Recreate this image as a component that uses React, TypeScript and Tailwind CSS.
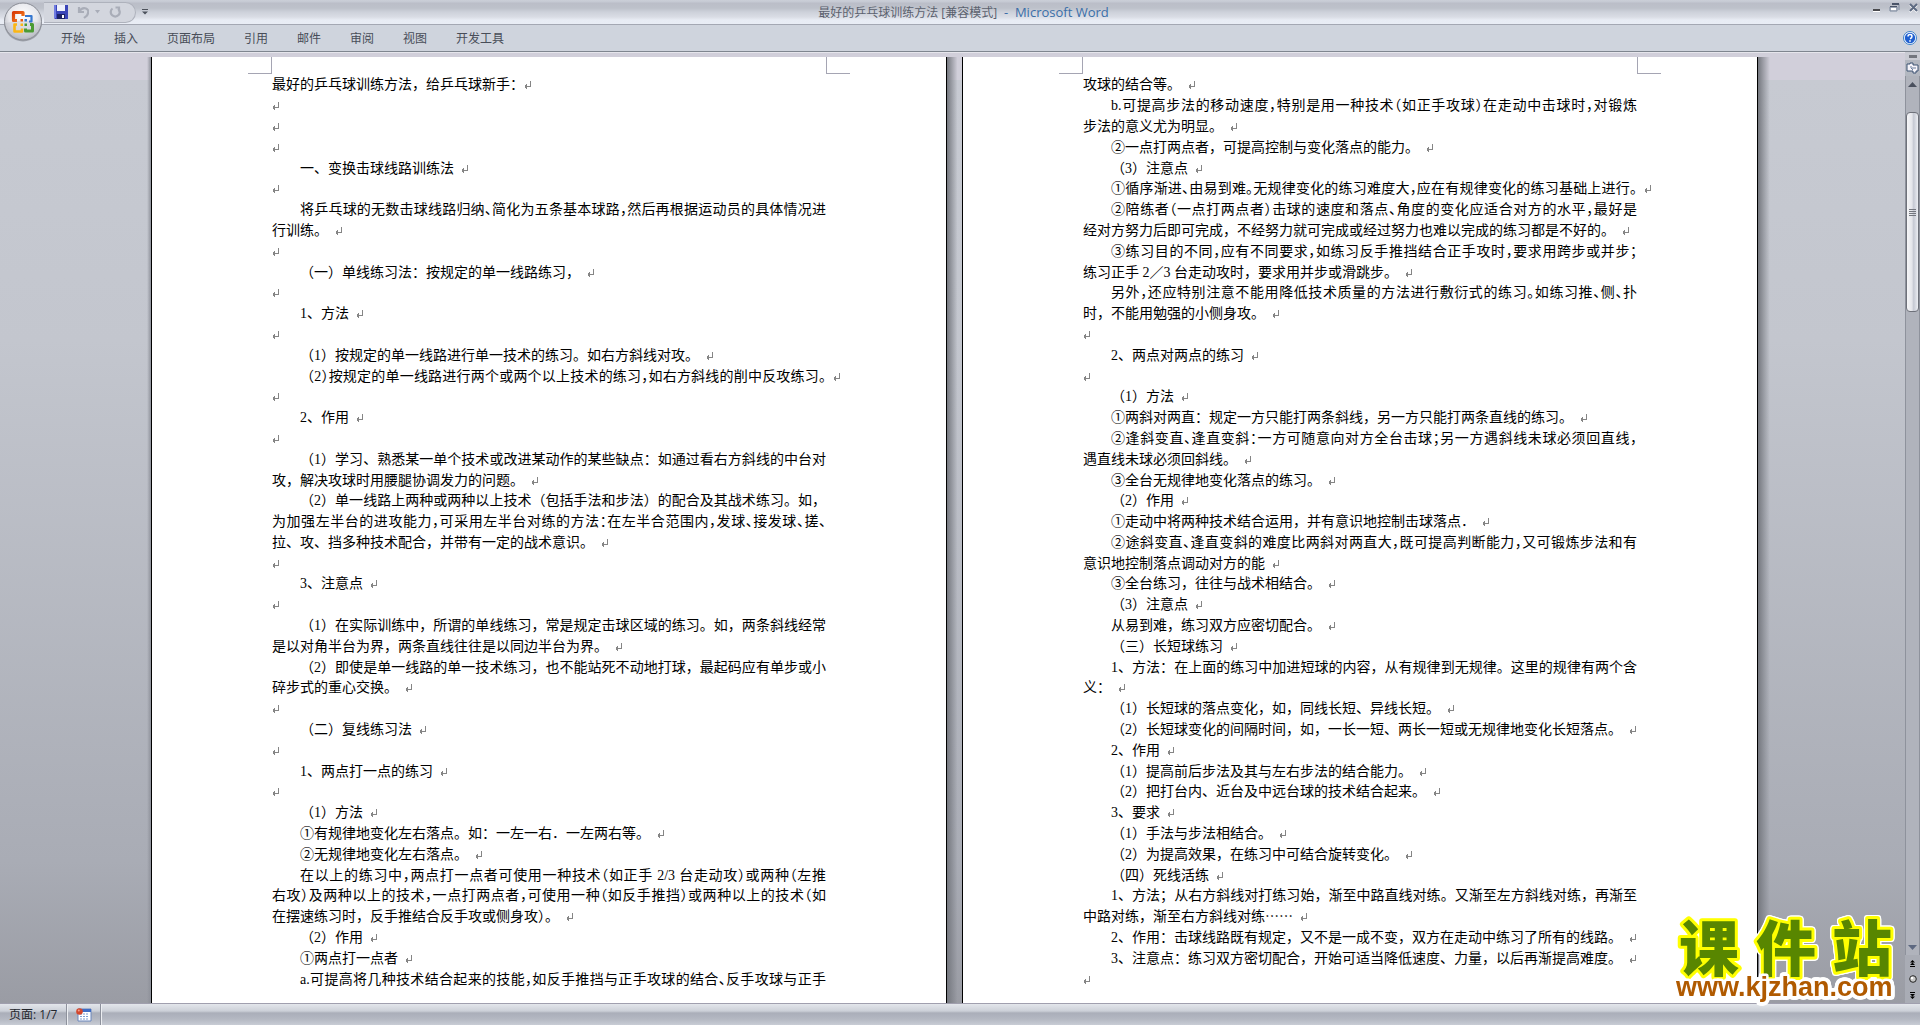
import React from "react";
import { clsx } from "clsx";

interface Line {
  text?: string;
  // first line of a paragraph starts two characters in
  indent?: boolean;
  // line runs on into the next one, so it is justified and has no mark
  fill?: boolean;
  // mark sits right against the text
  flush?: boolean;
}

const TABS = ["开始", "插入", "页面布局", "引用", "邮件", "审阅", "视图", "开发工具"];

const MAX_CELLS = 39.5;

const PAGE_ONE: Line[] = [
  { text: "最好的乒乓球训练方法，给乒乓球新手：", flush: true },
  {},
  {},
  {},
  { text: "一、变换击球线路训练法", indent: true },
  {},
  { text: "将乒乓球的无数击球线路归纳、简化为五条基本球路，然后再根据运动员的具体情况进", indent: true, fill: true },
  { text: "行训练。" },
  {},
  { text: "（一）单线练习法：按规定的单一线路练习，", indent: true },
  {},
  { text: "1、方法", indent: true },
  {},
  { text: "（1）按规定的单一线路进行单一技术的练习。如右方斜线对攻。", indent: true },
  { text: "（2）按规定的单一线路进行两个或两个以上技术的练习，如右方斜线的削中反攻练习。", indent: true },
  {},
  { text: "2、作用", indent: true },
  {},
  { text: "（1）学习、熟悉某一单个技术或改进某动作的某些缺点：如通过看右方斜线的中台对", indent: true, fill: true },
  { text: "攻，解决攻球时用腰腿协调发力的问题。" },
  { text: "（2）单一线路上两种或两种以上技术（包括手法和步法）的配合及其战术练习。如，", indent: true, fill: true },
  { text: "为加强左半台的进攻能力，可采用左半台对练的方法：在左半合范围内，发球、接发球、搓、", fill: true },
  { text: "拉、攻、挡多种技术配合，并带有一定的战术意识。" },
  {},
  { text: "3、注意点", indent: true },
  {},
  { text: "（1）在实际训练中，所谓的单线练习，常是规定击球区域的练习。如，两条斜线经常", indent: true, fill: true },
  { text: "是以对角半台为界，两条直线往往是以同边半台为界。" },
  { text: "（2）即使是单一线路的单一技术练习，也不能站死不动地打球，最起码应有单步或小", indent: true, fill: true },
  { text: "碎步式的重心交换。" },
  {},
  { text: "（二）复线练习法", indent: true },
  {},
  { text: "1、两点打一点的练习", indent: true },
  {},
  { text: "（1）方法", indent: true },
  { text: "①有规律地变化左右落点。如：一左一右．一左两右等。", indent: true },
  { text: "②无规律地变化左右落点。", indent: true },
  { text: "在以上的练习中，两点打一点者可使用一种技术（如正手 2/3 台走动攻）或两种（左推", indent: true, fill: true },
  { text: "右攻）及两种以上的技术，一点打两点者，可使用一种（如反手推挡）或两种以上的技术（如", fill: true },
  { text: "在摆速练习时，反手推结合反手攻或侧身攻）。" },
  { text: "（2）作用", indent: true },
  { text: "①两点打一点者", indent: true },
  { text: "a.可提高将几种技术结合起来的技能，如反手推挡与正手攻球的结合、反手攻球与正手", indent: true, fill: true },
];

const PAGE_TWO: Line[] = [
  { text: "攻球的结合等。" },
  { text: "b.可提高步法的移动速度，特别是用一种技术（如正手攻球）在走动中击球时，对锻炼", indent: true, fill: true },
  { text: "步法的意义尤为明显。" },
  { text: "②一点打两点者，可提高控制与变化落点的能力。", indent: true },
  { text: "（3）注意点", indent: true },
  { text: "①循序渐进、由易到难。无规律变化的练习难度大，应在有规律变化的练习基础上进行。", indent: true },
  { text: "②陪练者（一点打两点者）击球的速度和落点、角度的变化应适合对方的水平，最好是", indent: true, fill: true },
  { text: "经对方努力后即可完成，不经努力就可完成或经过努力也难以完成的练习都是不好的。" },
  { text: "③练习目的不同，应有不同要求，如练习反手推挡结合正手攻时，要求用跨步或并步；", indent: true, fill: true },
  { text: "练习正手 2／3 台走动攻时，要求用并步或滑跳步。" },
  { text: "另外，还应特别注意不能用降低技术质量的方法进行敷衍式的练习。如练习推、侧、扑", indent: true, fill: true },
  { text: "时，不能用勉强的小侧身攻。" },
  {},
  { text: "2、两点对两点的练习", indent: true },
  {},
  { text: "（1）方法", indent: true },
  { text: "①两斜对两直：规定一方只能打两条斜线，另一方只能打两条直线的练习。", indent: true },
  { text: "②逢斜变直、逢直变斜：一方可随意向对方全台击球；另一方遇斜线未球必须回直线，", indent: true, fill: true },
  { text: "遇直线未球必须回斜线。" },
  { text: "③全台无规律地变化落点的练习。", indent: true },
  { text: "（2）作用", indent: true },
  { text: "①走动中将两种技术结合运用，并有意识地控制击球落点．", indent: true },
  { text: "②途斜变直、逢直变斜的难度比两斜对两直大，既可提高判断能力，又可锻炼步法和有", indent: true, fill: true },
  { text: "意识地控制落点调动对方的能" },
  { text: "③全台练习，往往与战术相结合。", indent: true },
  { text: "（3）注意点", indent: true },
  { text: "从易到难，练习双方应密切配合。", indent: true },
  { text: "（三）长短球练习", indent: true },
  { text: "1、方法：在上面的练习中加进短球的内容，从有规律到无规律。这里的规律有两个含", indent: true, fill: true },
  { text: "义：" },
  { text: "（1）长短球的落点变化，如，同线长短、异线长短。", indent: true },
  { text: "（2）长短球变化的间隔时间，如，一长一短、两长一短或无规律地变化长短落点。", indent: true },
  { text: "2、作用", indent: true },
  { text: "（1）提高前后步法及其与左右步法的结合能力。", indent: true },
  { text: "（2）把打台内、近台及中远台球的技术结合起来。", indent: true },
  { text: "3、要求", indent: true },
  { text: "（1）手法与步法相结合。", indent: true },
  { text: "（2）为提高效果，在练习中可结合旋转变化。", indent: true },
  { text: "（四）死线活练", indent: true },
  { text: "1、方法；从右方斜线对打练习始，渐至中路直线对练。又渐至左方斜线对练，再渐至", indent: true, fill: true },
  { text: "中路对练，渐至右方斜线对练⋯⋯" },
  { text: "2、作用：击球线路既有规定，又不是一成不变，双方在走动中练习了所有的线路。", indent: true },
  { text: "3、注意点：练习双方密切配合，开始可适当降低速度、力量，以后再渐提高难度。", indent: true },
  {},
];

// a Chinese character takes one cell, a Latin one half
function countCells({ text = "", indent }: Line) {
  let cells = indent ? 2 : 0;
  for (const char of text) {
    cells += char.charCodeAt(0) < 128 ? 0.5 : 1;
  }
  return cells;
}

function ReturnMark({ className }: { className?: string }) {
  return (
    <svg
      width="8"
      height="8"
      viewBox="0 0 8 8"
      aria-hidden="true"
      className={clsx("shrink-0", className)}
      shapeRendering="crispEdges"
    >
      <path d="M6.500 0v5M0.500 5h6M1.500 4v3M2.500 3v5" stroke="#858585" fill="none" />
    </svg>
  );
}

function DocLine({ line }: { line: Line }) {
  // too many characters for the line: its punctuation goes half width
  const tight = countCells(line) > MAX_CELLS;
  const stretch = line.fill || tight;
  const opening = line.text?.startsWith("（") ? "（" : "";

  return (
    <p className={clsx("flex items-center whitespace-nowrap", line.indent && "pl-7")}>
      {line.text && (
        <span
          className={clsx(
            stretch && "min-w-0 flex-1 [text-align-last:justify]",
            tight && "[font-feature-settings:'halt']",
          )}
        >
          {opening && <span className="[font-feature-settings:normal]">{opening}</span>}
          {line.text.slice(opening.length)}
        </span>
      )}
      {!line.fill && (
        <span className="flex w-0">
          <ReturnMark className={line.text && !line.flush ? "ml-[7px]" : undefined} />
        </span>
      )}
    </p>
  );
}

function Page({ lines }: { lines: Line[] }) {
  return (
    <article className="flex w-[796px] shrink-0 flex-col border-x border-black bg-white">
      <div className="flex h-[17px] shrink-0 justify-between px-24">
        <span className="w-6 border-r border-b border-[#a5a5b3]" />
        <span className="w-6 border-b border-l border-[#a5a5b3]" />
      </div>
      <div className="grid min-h-0 flex-1 auto-rows-fr px-[120px] pt-px pb-[13px] font-['Liberation_Serif','Noto_Sans_CJK_SC',serif] text-[14px] leading-5 text-black">
        {lines.map((line, i) => (
          <DocLine key={i} line={line} />
        ))}
      </div>
    </article>
  );
}

function OfficeLogo() {
  return (
    <svg width="40" height="40" viewBox="0 0 40 40" aria-hidden="true">
      <defs>
        <radialGradient id="orb" cx="50%" cy="35%" r="65%">
          <stop offset="0" stopColor="#ffffff" />
          <stop offset=".6" stopColor="#e6e7ec" />
          <stop offset="1" stopColor="#b0b3bb" />
        </radialGradient>
        <linearGradient id="orbRed" x1="0" y1="0" x2="1" y2="1">
          <stop offset="0" stopColor="#d83b08" />
          <stop offset="1" stopColor="#f58220" />
        </linearGradient>
      </defs>
      <circle cx="20" cy="20.5" r="19" fill="#7d8089" opacity=".6" />
      <circle cx="20" cy="19.5" r="18.5" fill="url(#orb)" stroke="#8b8e97" />
      <path d="M3 21a17 15 0 0 0 34 0q-17-5-34 0z" fill="#c3c6ce" opacity=".45" />
      <g fill="none" strokeLinejoin="round">
        <path d="M14 18.500h-3.500v-8h9.500v3.500" stroke="url(#orbRed)" strokeWidth="3.200" />
        <path d="M22 14h6.500v5.500h-2.500" stroke="#3577d0" strokeWidth="2.200" />
        <path d="M14 22.500h-2.500v7h7.500v-3" stroke="#fbb614" strokeWidth="2.600" />
        <path d="M27 22.500h2.500v6.500h-7v-2.500" stroke="#4b9b34" strokeWidth="3" />
      </g>
      <g>
        <rect x="17.500" y="17" width="2.500" height="2.500" fill="#e8590c" />
        <rect x="21.500" y="17" width="2.500" height="2.500" fill="#3577d0" />
        <rect x="17.500" y="21.500" width="2.500" height="2.500" fill="#fbb614" />
        <rect x="21.500" y="21.500" width="2.500" height="2.500" fill="#4b9b34" />
      </g>
    </svg>
  );
}

function QuickAccess() {
  return (
    <div className="ml-11 flex h-[21px] items-center rounded-r-full border border-l-0 border-[#aeb2bc] bg-[#d3d6de] pr-[14px] pl-[10px]">
      <button aria-label="保存">
        <svg width="14" height="14" viewBox="0 0 14 14">
          <path d="M0 0h14v14H1l-1-1z" fill="#3a45b8" />
          <path d="M0 0h2v13H0z" fill="#6f7be0" />
          <path d="M3 0h8v6H3z" fill="#eef1fb" />
          <path d="M3 9h8v5H3z" fill="#1c2266" />
          <path d="M8 10h2v3H8z" fill="#fff" />
        </svg>
      </button>
      <button aria-label="撤消" className="ml-[9px]">
        <svg width="12" height="13" viewBox="0 0 12 13">
          <path d="M2 1v5h5M2 6q3-5 7-3.500t1 7L7 12" fill="none" stroke="#a9adb8" strokeWidth="2.200" />
        </svg>
      </button>
      <button aria-label="撤消列表" className="ml-[6px]">
        <svg width="5" height="4" viewBox="0 0 5 4">
          <path d="M0 0h5L2.500 3.500z" fill="#a9adb8" />
        </svg>
      </button>
      <button aria-label="重复" className="ml-[9px]">
        <svg width="12" height="13" viewBox="0 0 12 13">
          <path d="M3.500 2.500a4.500 4.500 0 1 0 5.500 0M6.500 1.500h3.500v4" fill="none" stroke="#a9adb8" strokeWidth="2.200" />
        </svg>
      </button>
    </div>
  );
}

function TitleBar() {
  return (
    <header className="flex h-[25px] shrink-0 items-center border-b border-[#a4a8b3] bg-[linear-gradient(#cbcfd8_0,#c5c9d3_2px,#bbbec8_3px,#bdc1ca_8px,#cdd1da_12px,#dadde5_17px,#e8ecf4_20px,#e9edf5_100%)]">
      <div className="flex flex-1 items-center">
        <QuickAccess />
        <button aria-label="自定义快速访问工具栏" className="ml-[6px]">
          <svg width="6" height="6" viewBox="0 0 6 6">
            <path d="M0 0h6v1H0zM0 2.500h6L3 5.500z" fill="#4d525c" />
          </svg>
        </button>
      </div>
      <h1 className="pl-2 font-['Open_Sans','Noto_Sans_CJK_SC',sans-serif] text-[12px] leading-5 whitespace-pre text-[#5b616e]">
        最好的乒乓球训练方法 [兼容模式]<span className="text-[13px] text-[#3a6ea8]">  -  Microsoft Word</span>
      </h1>
      <div className="flex flex-1 items-center justify-end gap-2 pr-px pb-2">
        <button aria-label="最小化">
          <svg width="9" height="10" viewBox="0 0 9 10">
            <path d="M1 6h7v2H1z" fill="#4a4a4e" />
            <path d="M1 8h7v1H1z" fill="#fff" />
          </svg>
        </button>
        <button aria-label="还原">
          <svg width="11" height="10" viewBox="0 0 11 10">
            <path d="M3 1h7v6M1 4h7v4H1z" fill="none" stroke="#7b879c" />
            <path d="M3 0h7v2H3zM1 3h7v1H1z" fill="#4a5468" />
            <path d="M2 5h5v2H2z" fill="#fff" />
          </svg>
        </button>
        <button aria-label="关闭">
          <svg width="11" height="10" viewBox="0 0 11 10">
            <path d="M2 2l7 7M9 2L2 9" stroke="#fff" strokeWidth="2" />
            <path d="M2 1l7 7M9 1L2 8" stroke="#5d6a82" strokeWidth="2" />
          </svg>
        </button>
      </div>
    </header>
  );
}

function Ribbon() {
  return (
    <nav className="flex h-[27px] shrink-0 items-center justify-between border-b border-[#7f868f] bg-[#cfd4dd] pr-[3px] pl-[61px]">
      <div className="flex gap-[29px]">
        {TABS.map((tab) => (
          <button key={tab} className="text-[12px] leading-5 text-[#484d58]">
            {tab}
          </button>
        ))}
      </div>
      <button aria-label="帮助">
        <svg width="14" height="14" viewBox="0 0 14 14">
          <circle cx="7" cy="7" r="6.500" fill="#fff" stroke="#3c7fc8" />
          <circle cx="7" cy="7" r="5.200" fill="#1f5fd0" />
          <path d="M5 5.500q0-2 2-2t2 1.700T7 7.800" fill="none" stroke="#fff" strokeWidth="1.500" />
          <path d="M6.200 9.200h1.600v1.500H6.200z" fill="#fff" />
        </svg>
      </button>
    </nav>
  );
}

function ScrollBar() {
  return (
    <aside className="flex w-[15px] shrink-0 flex-col items-stretch bg-[#c9cbd3]">
      <div className="flex h-2 items-center justify-center">
        <span className="h-[3px] w-2 bg-[#73767e]" />
      </div>
      <button aria-label="标尺" className="flex h-4 items-center justify-center bg-[#b3b7c0]">
        <svg width="13" height="12" viewBox="0 0 13 12">
          <path d="M1 2h3V1h3v2h5v6h-2v2H7V9H1z" fill="#f6f4fa" stroke="#3d5373" />
          <path d="M5 4v2M7 5v2M9 5v2M5 6l2 2" stroke="#6b7f9c" fill="none" />
        </svg>
      </button>
      <div className="flex flex-1 flex-col border-x border-[#8e929c] bg-[#b0b3bc]">
        <button aria-label="向上滚动" className="flex h-4 items-center justify-center">
          <svg width="9" height="5" viewBox="0 0 9 5">
            <path d="M4.500 0L9 5H0z" fill="#4a505e" />
          </svg>
        </button>
        <div className="flex flex-1 flex-col pt-5">
          <div className="flex h-[200px] flex-col items-center justify-center gap-px rounded-sm border border-[#6e717a] bg-[linear-gradient(90deg,#f6f6f8,#e4e5ea_45%,#c6c9d3_60%,#eceef3)]">
            <span className="h-px w-[7px] bg-[#73767e]" />
            <span className="h-px w-[7px] bg-[#73767e]" />
            <span className="h-px w-[7px] bg-[#73767e]" />
            <span className="h-px w-[7px] bg-[#73767e]" />
          </div>
        </div>
        <button aria-label="向下滚动" className="flex h-4 items-center justify-center">
          <svg width="9" height="5" viewBox="0 0 9 5">
            <path d="M0 0h9L4.500 5z" fill="#5d6880" />
          </svg>
        </button>
      </div>
      <div className="flex h-12 flex-col items-center bg-[#a9acb5]">
        <button aria-label="前一页" className="flex h-4 items-center">
          <svg width="7" height="7" viewBox="0 0 7 7">
            <path d="M3.500 0L6 2.500H1zM3.500 2.500L6 5H1zM1 6h5v1H1z" fill="#000" />
          </svg>
        </button>
        <button aria-label="选择浏览对象" className="flex h-4 items-center">
          <svg width="8" height="8" viewBox="0 0 8 8">
            <circle cx="4" cy="4" r="3.300" fill="#c8c8c8" stroke="#222" />
            <circle cx="3" cy="3" r="1.300" fill="#fff" />
          </svg>
        </button>
        <button aria-label="下一页" className="flex h-4 items-center">
          <svg width="7" height="7" viewBox="0 0 7 7">
            <path d="M1 0h5v1H1zM1 2h5L3.500 4.500zM1 4.500h5L3.500 7z" fill="#000" />
          </svg>
        </button>
      </div>
    </aside>
  );
}

function StatusBar() {
  return (
    <footer className="flex h-[22px] shrink-0 items-stretch border-t border-[#a09fae] bg-[linear-gradient(#e3e6eb_0,#ccd0d8_7px,#aaaeb9_9px,#b4b8c2_15px,#c8ccd5_100%)] text-[12px] text-[#23262d]">
      <button className="border-r border-[#8d919c] px-[9px] font-['Open_Sans','Noto_Sans_CJK_SC',sans-serif] leading-5">
        页面: 1/7
      </button>
      <button aria-label="录制宏" className="flex items-center border-r border-[#8d919c] border-l border-l-[#eceef2] px-2">
        <svg width="16" height="14" viewBox="0 0 16 14">
          <path d="M2 1h13v12H2z" fill="#fff" stroke="#6a87bd" />
          <path d="M2 1h13v3H2z" fill="#3f6cc4" />
          <path d="M4 6h9M4 8.500h9M4 11h9" stroke="#7f9dd0" strokeDasharray="2 1" />
          <circle cx="3.500" cy="3.500" r="3.300" fill="#d4472c" />
          <circle cx="2.800" cy="2.600" r="1" fill="#f3a08c" />
        </svg>
      </button>
      <span className="border-l border-[#eceef2]" />
    </footer>
  );
}

function SiteStamp() {
  return (
    <a href="#kjzhan" className="absolute right-[15px] bottom-[15px]">
      <svg
        width="240"
        height="110"
        viewBox="0 0 240 110"
        className="[filter:drop-shadow(1px_0_0_#fff)_drop-shadow(-1px_0_0_#fff)_drop-shadow(0_1px_0_#fff)_drop-shadow(0_-1px_0_#fff)]"
      >
        <g
          fill="#588600"
          stroke="#ffff00"
          strokeWidth="6"
          strokeLinejoin="round"
          paintOrder="stroke"
          fontSize="60"
          fontWeight="900"
          textAnchor="middle"
          fontFamily="'Noto Sans CJK SC', sans-serif"
        >
          <text x="44" y="71">课</text>
          <text x="121" y="71">件</text>
          <text x="197" y="71">站</text>
        </g>
        <text
          x="11"
          y="96"
          fill="#b05a00"
          stroke="#fff"
          strokeWidth="5"
          strokeLinejoin="round"
          paintOrder="stroke"
          fontSize="27"
          fontWeight="700"
          fontFamily="'Liberation Sans', sans-serif"
        >
          www.kjzhan.com
        </text>
      </svg>
    </a>
  );
}

export default function App() {
  return (
    <div
      lang="zh-CN"
      className="relative flex h-screen flex-col overflow-hidden font-['Noto_Sans_CJK_SC',sans-serif]"
    >
      <TitleBar />
      <Ribbon />

      <div className="flex min-h-0 flex-1">
        <div className="flex min-w-0 flex-1 flex-col">
          <div className="h-[5px] shrink-0 border-t border-[#e6e6ec] bg-[#d1cfda]" />
          <main className="flex min-h-0 flex-1 justify-center overflow-hidden bg-[linear-gradient(#d1cfda_23px,#c7cad2_23px,#c3c6ce_30%,#a9acb5_85%,#9a9ca4_100%)] pl-3">
            <div className="w-1 bg-linear-to-r from-transparent to-[#8d9099]" />
            <Page lines={PAGE_ONE} />
            <div className="w-[15px] bg-linear-to-r from-[#75787f] to-transparent to-70%" />
            <Page lines={PAGE_TWO} />
            <div className="w-3 bg-linear-to-r from-[#75787f] to-transparent" />
          </main>
        </div>
        <ScrollBar />
      </div>

      <StatusBar />

      {/* the round Office button lies over both bars */}
      <button aria-label="Office 按钮" className="absolute top-[2px] left-[3px]">
        <OfficeLogo />
      </button>
      <SiteStamp />
    </div>
  );
}
